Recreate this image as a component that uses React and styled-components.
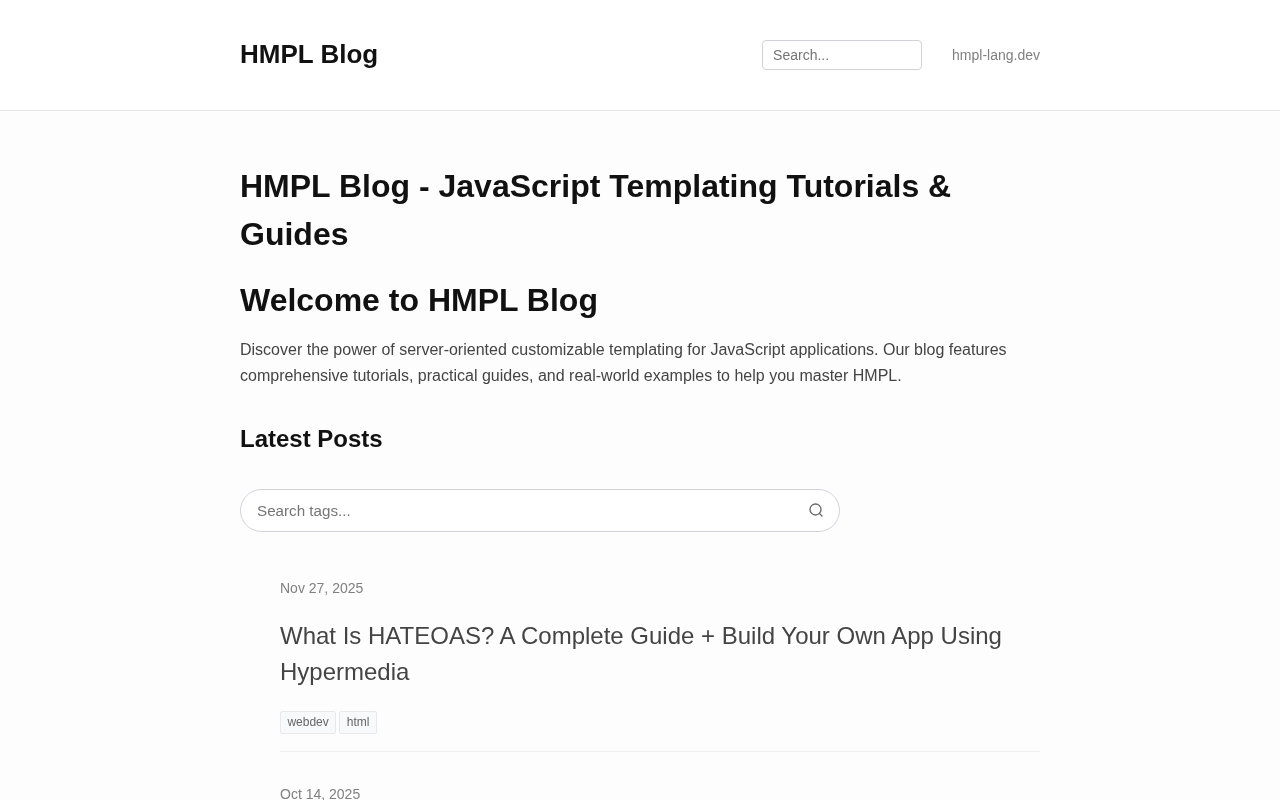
import styled, { createGlobalStyle } from "styled-components";

const GlobalStyle = createGlobalStyle`
  * {
    box-sizing: border-box;
  }
  html, body {
    margin: 0;
    padding: 0;
    background: #fdfdfd;
    font-family: "Liberation Sans", Arial, sans-serif;
    color: #3a3a3c;
  }
`;

const Page = styled.div`
  will-change: opacity;
`;

const Header = styled.header`
  height: 111px;
  background: #fff;
  border-bottom: 1px solid #e6e6e8;
  display: flex;
  justify-content: center;
  align-items: center;
`;

const HeaderInner = styled.div`
  width: 800px;
  display: flex;
  justify-content: space-between;
  align-items: center;
  will-change: opacity;
`;

const Logo = styled.a`
  font-size: 26px;
  line-height: 30px;
  margin-top: -2px;
  font-weight: 700;
  color: #111;
  text-decoration: none;
`;

const HeaderRight = styled.div`
  display: flex;
  align-items: center;
  gap: 30px;
`;

const HeaderSearch = styled.input`
  width: 160px;
  height: 30px;
  padding: 0 10px;
  font: 14px "Liberation Sans", Arial, sans-serif;
  background: #fff;
  border: 1px solid #d1d1dc;
  border-radius: 4px;
  outline: none;

  &::placeholder {
    color: #757575;
    opacity: 1;
  }
`;

const SiteLink = styled.a`
  font-size: 14px;
  color: #808080;
  text-decoration: none;
`;

const Main = styled.main`
  width: 800px;
  margin: 0 auto;
  padding-top: 51px;
`;

const Title = styled.h1`
  margin: 0;
  font-size: 32px;
  line-height: 48px;
  font-weight: 700;
  color: #111;
`;

const Welcome = styled.h2`
  margin: 18px 0 0;
  font-size: 32px;
  line-height: 48px;
  font-weight: 700;
  color: #111;
`;

const Intro = styled.p`
  margin: 13px 0 0;
  font-size: 16px;
  line-height: 26px;
  color: #444;
`;

const SectionTitle = styled.h3`
  margin: 36px 0 0;
  font-size: 24px;
  line-height: 28px;
  font-weight: 700;
  color: #111;
`;

const TagSearch = styled.div`
  position: relative;
  width: 600px;
  height: 43px;
  margin-top: 36px;
`;

const TagInput = styled.input`
  width: 100%;
  height: 100%;
  padding: 0 50px 0 16px;
  font: 15.2px "Liberation Sans", Arial, sans-serif;
  color: #444;
  background: #fff;
  border: 1px solid #d1d1dc;
  border-radius: 22px;
  outline: none;

  &::placeholder {
    color: #757575;
    opacity: 1;
  }
`;

const SearchIcon = styled.svg`
  position: absolute;
  top: 13px;
  right: 16px;
  width: 16px;
  height: 16px;
  fill: none;
  stroke: #666;
  stroke-width: 1.3;
  stroke-linecap: round;
`;

const PostList = styled.div`
  margin-top: 48px;
  padding-left: 40px;
`;

const Post = styled.article`
  padding-bottom: 17px;
  margin-bottom: 34px;
  border-bottom: 1px solid #f0f0f2;
`;

const PostDate = styled.time`
  display: block;
  font-size: 14px;
  line-height: 16px;
  color: #808080;
`;

const PostTitle = styled.a`
  display: block;
  margin-top: 22px;
  font-size: 24px;
  line-height: 36px;
  color: #444;
  text-decoration: none;
`;

const Tags = styled.div`
  display: flex;
  gap: 3.2px;
  margin-top: 21px;
`;

const Tag = styled.span`
  height: 23px;
  padding: 0 6.4px;
  font-size: 12px;
  line-height: 21px;
  color: #666;
  background: #f8f9fa;
  border: 1px solid #e9e9ec;
  border-radius: 2px;
`;

const App = () => {
  return (
    <Page>
      <GlobalStyle />
      <Header>
        <HeaderInner>
          <Logo href="#">HMPL Blog</Logo>
          <HeaderRight>
            <HeaderSearch placeholder="Search..." />
            <SiteLink href="#">hmpl-lang.dev</SiteLink>
          </HeaderRight>
        </HeaderInner>
      </Header>
      <Main>
        <Title>HMPL Blog - JavaScript Templating Tutorials &amp; Guides</Title>
        <Welcome>Welcome to HMPL Blog</Welcome>
        <Intro>
          Discover the power of server-oriented customizable templating for JavaScript
          applications. Our blog features comprehensive tutorials, practical guides, and
          real-world examples to help you master HMPL.
        </Intro>
        <SectionTitle>Latest Posts</SectionTitle>
        <TagSearch>
          <TagInput placeholder="Search tags..." />
          <SearchIcon viewBox="0 0 16 16">
            <circle cx="7.5" cy="7.5" r="5.5" />
            <line x1="11.6" y1="11.6" x2="14" y2="14" />
          </SearchIcon>
        </TagSearch>
        <PostList>
          <Post>
            <PostDate>Nov 27, 2025</PostDate>
            <PostTitle href="#">
              What Is HATEOAS? A Complete Guide + Build Your Own App Using Hypermedia
            </PostTitle>
            <Tags>
              <Tag>webdev</Tag>
              <Tag>html</Tag>
            </Tags>
          </Post>
          <PostDate>Oct 14, 2025</PostDate>
        </PostList>
      </Main>
    </Page>
  );
};

export default App;
